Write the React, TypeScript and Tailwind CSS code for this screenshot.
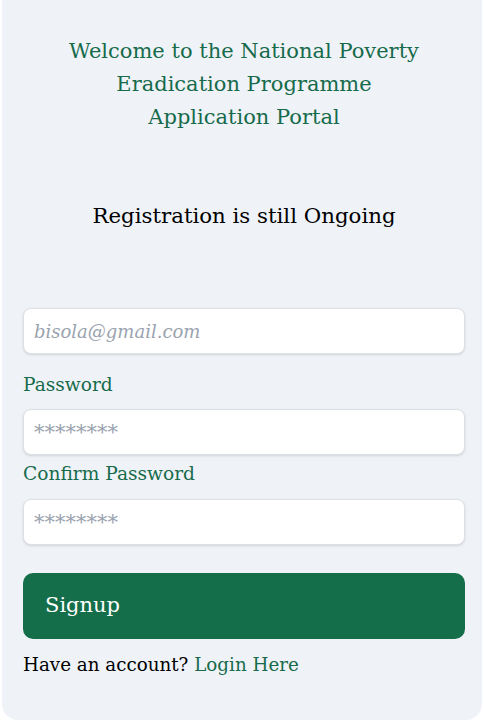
import React from "react";

export default function App() {
  const font = { fontFamily: '"DejaVu Serif", serif' };
  const inputCls =
    "h-[46px] w-full rounded-lg border border-[#dde1e6] bg-white px-[10px] text-[18px] shadow-sm outline-none placeholder:italic placeholder:text-[#9aa3af]";
  return (
    <div className="min-h-[722px] bg-white" style={font}>
      <div className="mx-[2px] h-[720px] rounded-b-2xl bg-[#eff3f8] pl-[21px] pr-[17px]">
        <div className="pt-[35px] text-center text-[21px] leading-[33px] text-[#176b4b]">
          <p>Welcome to the National Poverty</p>
          <p>Eradication Programme</p>
          <p>Application Portal</p>
        </div>
        <p className="mt-[67px] text-center text-[21.3px] leading-[30px] text-black">
          Registration is still Ongoing
        </p>
        <form className="mt-[77px] flex flex-col" onSubmit={(e) => e.preventDefault()}>
          <input type="email" placeholder="bisola@gmail.com" className={inputCls} />
          <label className="mt-[18px] text-[18.6px] leading-[26px] text-[#176b4b]">Password</label>
          <input
            type="password"
            placeholder="********"
            className={"mt-[11px] placeholder:text-[21px] " + inputCls}
          />
          <label className="mt-[6px] text-[18.6px] leading-[26px] text-[#176b4b]">Confirm Password</label>
          <input
            type="password"
            placeholder="********"
            className={"mt-[12px] placeholder:text-[21px] " + inputCls}
          />
          <button
            type="submit"
            className="mt-[28px] h-[66px] w-full rounded-[10px] bg-[#146e4a] pl-[22px] text-left text-[21px] text-white"
          >
            Signup
          </button>
          <p className="mt-[13px] text-[18.3px] leading-[26px] text-black">
            Have an account? <span className="text-[#176b4b]">Login Here</span>
          </p>
        </form>
      </div>
    </div>
  );
}
